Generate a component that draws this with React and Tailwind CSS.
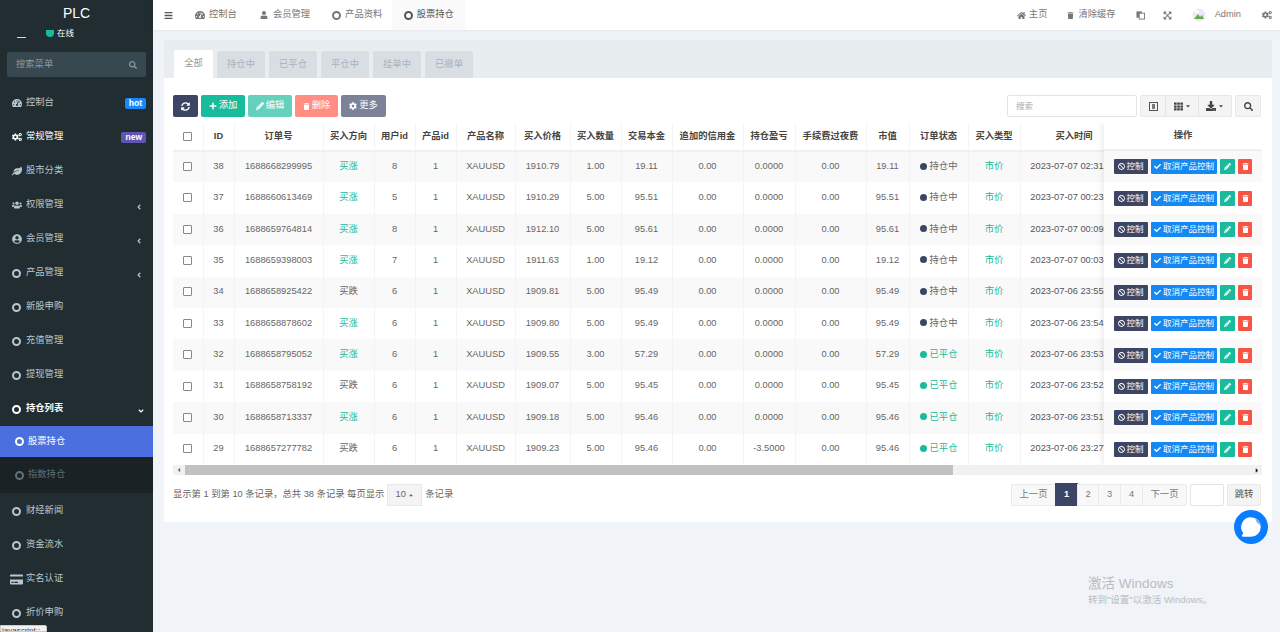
import {
  FaBan, FaBars, FaCheck, FaCog, FaCogs, FaCreditCard, FaDownload, FaHome, FaLeaf,
  FaPencilAlt, FaPlus, FaSearch, FaSyncAlt, FaTachometerAlt, FaTh, FaTrash, FaUser, FaUserCircle,
  FaUsers, FaExpandArrowsAlt, FaAngleLeft, FaAngleDown, FaCaretDown, FaCaretUp, FaCaretLeft, FaCaretRight,
} from "react-icons/fa";

// font awesome's circle-o reads heavier than FaRegCircle at this size
function Ring({ className = "" }) {
  return <span className={`inline-block w-[9px] h-[9px] rounded-full border-2 border-current ${className}`} />;
}

const menu = [
  { icon: FaTachometerAlt, label: "控制台", badge: "hot" },
  { icon: FaCogs, label: "常规管理", badge: "new", bright: true },
  { icon: FaLeaf, label: "股市分类" },
  { icon: FaUsers, label: "权限管理", arrow: true },
  { icon: FaUserCircle, label: "会员管理", arrow: true },
  { icon: Ring, label: "产品管理", arrow: true },
  { icon: Ring, label: "新股申购" },
  { icon: Ring, label: "充值管理" },
  { icon: Ring, label: "提现管理" },
];

const menuAfter = [
  { icon: Ring, label: "财经新闻" },
  { icon: Ring, label: "资金流水" },
  { icon: FaCreditCard, label: "实名认证", iconClass: "text-[13px] -ml-[2px] shrink-0" },
  { icon: Ring, label: "折价申购" },
];

const columns = [
  ["ID", "w-[31px]"],
  ["订单号", "w-[89px]"],
  ["买入方向", "w-[51px]"],
  ["用户id", "w-[41px]"],
  ["产品id", "w-[41px]"],
  ["产品名称", "w-[59px]"],
  ["买入价格", "w-[55px]"],
  ["买入数量", "w-[51px]"],
  ["交易本金", "w-[51px]"],
  ["追加的信用金", "w-[71px]"],
  ["持仓盈亏", "w-[52px]"],
  ["手续费过夜费", "w-[71px]"],
  ["市值", "w-[43px]"],
  ["订单状态", "w-[59px]"],
  ["买入类型", "w-[52px]"],
  ["买入时间", "w-[108px]"],
];

const orders = [
  [38, "1688668299995", "买涨", 8, "1910.79", "1.00", "19.11", "0.0000", "持仓中", "2023-07-07 02:31"],
  [37, "1688660613469", "买涨", 5, "1910.29", "5.00", "95.51", "0.0000", "持仓中", "2023-07-07 00:23"],
  [36, "1688659764814", "买涨", 8, "1912.10", "5.00", "95.61", "0.0000", "持仓中", "2023-07-07 00:09"],
  [35, "1688659398003", "买涨", 7, "1911.63", "1.00", "19.12", "0.0000", "持仓中", "2023-07-07 00:03"],
  [34, "1688658925422", "买跌", 6, "1909.81", "5.00", "95.49", "0.0000", "持仓中", "2023-07-06 23:55"],
  [33, "1688658878602", "买涨", 6, "1909.80", "5.00", "95.49", "0.0000", "持仓中", "2023-07-06 23:54"],
  [32, "1688658795052", "买涨", 6, "1909.55", "3.00", "57.29", "0.0000", "已平仓", "2023-07-06 23:53"],
  [31, "1688658758192", "买跌", 6, "1909.07", "5.00", "95.45", "0.0000", "已平仓", "2023-07-06 23:52"],
  [30, "1688658713337", "买涨", 6, "1909.18", "5.00", "95.46", "0.0000", "已平仓", "2023-07-06 23:51"],
  [29, "1688657277782", "买跌", 6, "1909.23", "5.00", "95.46", "-3.5000", "已平仓", "2023-07-06 23:27"],
];

const cell = "border-r border-[#f4f4f4] text-center overflow-hidden whitespace-nowrap";

function MenuItem({ item }) {
  const Icon = item.icon;
  return (
    <div className={`h-[34px] pl-[12px] pr-[7px] flex items-center ${item.bright ? "text-white" : "text-[#b8c7ce]"}`}>
      <span className="w-[14px] flex justify-start">
        <Icon className={item.iconClass || "text-[10px]"} />
      </span>
      <span className="flex-1">{item.label}</span>
      {item.badge === "hot" && (
        <span className="bg-[#1989fa] text-white font-bold rounded-[2px] px-[4px] h-[11px] leading-[11px] text-[8.5px]">hot</span>
      )}
      {item.badge === "new" && (
        <span className="bg-[#6055b0] text-white font-bold rounded-[2px] px-[4px] h-[11px] leading-[11px] text-[8.5px]">new</span>
      )}
      {item.arrow && <FaAngleLeft className="text-[8px] mr-[3px] mt-[3px]" />}
    </div>
  );
}

function Sidebar() {
  return (
    <aside className="w-[153px] shrink-0 h-full bg-[#222d32] overflow-hidden flex flex-col text-[9.3px]">
      <div className="h-[26px] flex items-center justify-center text-white text-[14px]">PLC</div>
      <div className="h-[26px] relative">
        <span className="absolute left-[17px] top-[11px] w-[9px] h-px bg-white/80" />
        <div className="pl-[46px] pt-[1px] flex items-center text-white gap-[3px] text-[8.5px]">
          <span className="w-[8px] h-[7px] bg-[#18bc9c] rounded-b-full" />
          在线
        </div>
      </div>
      <div className="mx-[7px] h-[25px] bg-[#374850] rounded-[2px] flex items-center justify-between px-[9px] text-[#8a9aa2]">
        搜索菜单
        <FaSearch className="text-[8px]" />
      </div>
      <div className="mt-[9px]">
        {menu.map((item) => (
          <MenuItem key={item.label} item={item} />
        ))}
        <div className="h-[34px] pl-[12px] pr-[8px] flex items-center text-white font-bold">
          <span className="w-[14px] flex">
            <Ring />
          </span>
          <span className="flex-1">持仓列表</span>
          <FaAngleDown className="text-[8px] mt-[3px]" />
        </div>
        <div className="h-[31px] pl-[15px] flex items-center bg-[#4c6fdf] text-white">
          <span className="w-[13px] flex">
            <Ring />
          </span>
          股票持仓
        </div>
        <div className="h-[36px] pl-[15px] flex items-center bg-[#1a2226] text-[#5f7078]">
          <span className="w-[13px] flex">
            <Ring />
          </span>
          指数持仓
        </div>
        <div className="pt-[1px]">
          {menuAfter.map((item) => (
            <MenuItem key={item.label} item={item} />
          ))}
        </div>
      </div>
    </aside>
  );
}

function TopBar() {
  return (
    <header className="h-[30px] shrink-0 bg-white flex items-center text-[9.3px] text-[#777] shadow-[0_1px_2px_rgba(0,0,0,0.06)]">
      <FaBars className="ml-[11px] text-[9px] text-[#555]" />
      <div className="ml-[22px] flex items-center gap-[4px]">
        <FaTachometerAlt className="text-[10px]" />
        控制台
      </div>
      <div className="ml-[23px] flex items-center gap-[5px]">
        <FaUser className="text-[8px]" />
        会员管理
      </div>
      <div className="ml-[22px] flex items-center gap-[4px]">
        <Ring />
        产品资料
      </div>
      <div className="ml-[10px] h-full w-[73px] bg-[#fafafa] flex items-center justify-center gap-[4px] text-[#555]">
        <Ring />
        股票持仓
      </div>
      <div className="ml-auto flex items-center">
        <FaHome className="text-[9px] mr-[3px]" />
        主页
        <FaTrash className="text-[7px] ml-[20px] mr-[4px]" />
        清除缓存
        <svg viewBox="0 0 10 10" className="w-[9px] h-[10px] ml-[20px]">
          <rect x="0.5" y="1" width="6" height="7" fill="#777" />
          <rect x="3.5" y="3" width="6" height="6.5" fill="#fff" stroke="#777" strokeWidth="1" />
        </svg>
        <FaExpandArrowsAlt className="text-[9px] ml-[18px]" />
        <svg viewBox="0 0 14 16" className="w-[14px] h-[16px] ml-[20px]">
          <circle cx="7" cy="8" r="6.5" fill="#e4edf5" />
          <path d="M2 12 L6 7 L8 10 L10 8 L12 12 Z" fill="#6aa84f" />
          <rect x="3" y="3.5" width="4" height="2.5" fill="#fff" />
        </svg>
        <span className="ml-[9px]">Admin</span>
        <FaCogs className="text-[10px] ml-[21px] mr-[8px]" />
      </div>
    </header>
  );
}

function Tabs() {
  const tabs = ["持仓中", "已平仓", "平仓中", "挂单中", "已撤单"];
  return (
    <div className="h-[38px] bg-[#e8edf0] flex items-end pl-[10px] gap-[4px]">
      <div className="w-[39px] h-[28px] bg-white rounded-t-[2px] flex items-center justify-center text-[#999]">全部</div>
      {tabs.map((t) => (
        <div key={t} className="w-[48px] h-[27px] bg-[#d8dee4] rounded-t-[2px] flex items-center justify-center text-[#aab2b9]">
          {t}
        </div>
      ))}
    </div>
  );
}

function Toolbar() {
  return (
    <div className="h-[22px] flex items-stretch text-white">
      <button className="w-[25px] bg-[#3c4563] rounded-[2px] flex items-center justify-center">
        <FaSyncAlt className="text-[9px]" />
      </button>
      <button className="ml-[3px] w-[44px] bg-[#18bc9c] rounded-[2px] flex items-center justify-center gap-[2px]">
        <FaPlus className="text-[8px]" />
        添加
      </button>
      <button className="ml-[3px] w-[44px] bg-[#65d1bc] rounded-[2px] flex items-center justify-center gap-[2px]">
        <FaPencilAlt className="text-[8px]" />
        编辑
      </button>
      <button className="ml-[3px] w-[43px] bg-[#ff8d82] rounded-[2px] flex items-center justify-center gap-[2px]">
        <FaTrash className="text-[7px]" />
        删除
      </button>
      <button className="ml-[3px] w-[45px] bg-[#7c8298] rounded-[2px] flex items-center justify-center gap-[2px]">
        <FaCog className="text-[8px]" />
        更多
      </button>
      <div className="ml-auto w-[130px] bg-white border border-[#e4e4e4] rounded-[2px] flex items-center pl-[8px] text-[#aaa] text-[8.5px]">
        搜索
      </div>
      <div className="ml-[3px] w-[92px] flex bg-[#f4f4f4] border border-[#e8e8e8] rounded-[2px] text-[#444]">
        <div className="w-[25px] border-r border-[#e4e4e4] flex items-center justify-center">
          <svg viewBox="0 0 9 9" className="w-[9px] h-[9px]">
            <rect x="0.5" y="0.5" width="8" height="8" fill="none" stroke="#555" strokeWidth="1" />
            <rect x="3" y="2" width="3" height="5" fill="#777" />
          </svg>
        </div>
        <div className="w-[33px] border-r border-[#e4e4e4] flex items-center justify-center gap-[2px]">
          <FaTh className="text-[9px]" />
          <FaCaretDown className="text-[6px]" />
        </div>
        <div className="flex-1 flex items-center justify-center gap-[2px]">
          <FaDownload className="text-[10px]" />
          <FaCaretDown className="text-[6px]" />
        </div>
      </div>
      <div className="ml-[3px] mr-[1px] w-[26px] bg-[#f4f4f4] border border-[#e8e8e8] rounded-[2px] flex items-center justify-center text-[#444]">
        <FaSearch className="text-[9px]" />
      </div>
    </div>
  );
}

function OrderTable() {
  return (
    <div className="mt-[6px] relative h-[342px] overflow-hidden">
      <table className="table-fixed border-collapse w-[955px]">
        <colgroup>
          <col className="w-[30px]" />
          {columns.map(([name, w]) => (
            <col key={name} className={w} />
          ))}
        </colgroup>
        <thead>
          <tr className="h-[28px] border-b-2 border-[#f0f0f0] text-[#444]">
            <th className={cell}>
              <span className="inline-block w-[9px] h-[9px] border border-[#888] rounded-[1px] bg-white align-middle" />
            </th>
            {columns.map(([name]) => (
              <th key={name} className={`${cell} font-bold`}>
                {name}
              </th>
            ))}
          </tr>
        </thead>
        <tbody>
          {orders.map((o, i) => (
            <tr key={o[0]} className={`h-[31.4px] ${i % 2 === 0 ? "bg-[#f9f9f9]" : "bg-white"}`}>
              <td className={cell}>
                <span className="inline-block w-[9px] h-[9px] border border-[#888] rounded-[1px] bg-white align-middle" />
              </td>
              <td className={cell}>{o[0]}</td>
              <td className={cell}>{o[1]}</td>
              <td className={`${cell} ${o[2] === "买涨" ? "text-[#18bc9c]" : ""}`}>{o[2]}</td>
              <td className={cell}>{o[3]}</td>
              <td className={cell}>1</td>
              <td className={cell}>XAUUSD</td>
              <td className={cell}>{o[4]}</td>
              <td className={cell}>{o[5]}</td>
              <td className={cell}>{o[6]}</td>
              <td className={cell}>0.00</td>
              <td className={cell}>{o[7]}</td>
              <td className={cell}>0.00</td>
              <td className={cell}>{o[6]}</td>
              <td className={`${cell} ${o[8] === "已平仓" ? "text-[#18bc9c]" : ""}`}>
                <span
                  className={`inline-block w-[7px] h-[7px] rounded-full mr-[3px] align-[-0.5px] ${
                    o[8] === "已平仓" ? "bg-[#18bc9c]" : "bg-[#3c4563]"
                  }`}
                />
                {o[8]}
              </td>
              <td className={`${cell} text-[#18bc9c]`}>市价</td>
              <td className={`${cell} text-[#555] pr-[14px]`}>{o[9]}</td>
            </tr>
          ))}
        </tbody>
      </table>
      {/* fixed right column */}
      <div className="absolute right-0 top-0 w-[158px] bg-white shadow-[-2px_0_6px_rgba(0,0,0,0.08)]">
        <div className="h-[28px] border-b-2 border-[#f0f0f0] flex items-center justify-center font-bold text-[#444]">操作</div>
        {orders.map((o, i) => (
          <div
            key={o[0]}
            className={`h-[31.4px] flex items-center pl-[10px] gap-[3px] text-white ${i % 2 === 0 ? "bg-[#f9f9f9]" : "bg-white"}`}
          >
            <span className="w-[34px] h-[15px] bg-[#3c4563] rounded-[1px] flex items-center justify-center gap-[1px] text-[8.5px]">
              <FaBan className="text-[7px]" />
              控制
            </span>
            <span className="w-[66px] h-[15px] bg-[#1688f2] rounded-[1px] flex items-center justify-center gap-[2px] text-[8.5px]">
              <FaCheck className="text-[7px]" />
              取消产品控制
            </span>
            <span className="w-[15px] h-[15px] bg-[#18bc9c] rounded-[1px] flex items-center justify-center">
              <FaPencilAlt className="text-[7px]" />
            </span>
            <span className="w-[14px] h-[15px] bg-[#f75444] rounded-[1px] flex items-center justify-center">
              <FaTrash className="text-[7px]" />
            </span>
          </div>
        ))}
      </div>
    </div>
  );
}

function ScrollBar() {
  return (
    <div className="h-[10px] bg-[#f1f1f1] flex items-center text-[#555]">
      <FaCaretLeft className="text-[6px] w-[12px] shrink-0" />
      <div className="w-[768px] h-full bg-[#c1c1c1]" />
      <FaCaretRight className="text-[7px] w-[10px] ml-auto text-[#222]" />
    </div>
  );
}

function Pager() {
  const pageBtn = "h-[22px] bg-[#f8f8f8] border border-[#eaeaea] -ml-px flex items-center justify-center text-[#777]";
  return (
    <div className="mt-[8px] h-[23px] flex items-center text-[#666]">
      <span>显示第 1 到第 10 条记录，总共 38 条记录 每页显示</span>
      <div className="ml-[3px] w-[35px] h-[22px] bg-[#f4f4f4] border border-[#e8e8e8] flex items-center justify-center gap-[2px]">
        10
        <FaCaretUp className="text-[6px]" />
      </div>
      <span className="ml-[3px]">条记录</span>
      <div className="ml-auto flex items-center">
        <div className={`${pageBtn} w-[45px] rounded-l-[2px]`}>上一页</div>
        <div className="h-[23px] w-[23px] -ml-px bg-[#3c4563] text-white font-bold flex items-center justify-center">1</div>
        <div className={`${pageBtn} w-[22px]`}>2</div>
        <div className={`${pageBtn} w-[23px]`}>3</div>
        <div className={`${pageBtn} w-[23px]`}>4</div>
        <div className={`${pageBtn} w-[45px] rounded-r-[2px]`}>下一页</div>
        <div className="ml-[3px] w-[34px] h-[22px] bg-white border border-[#e4e4e4] rounded-[2px]" />
        <div className="ml-[3px] mr-[1px] w-[34px] h-[22px] bg-[#f4f4f4] border border-[#e8e8e8] rounded-[2px] flex items-center justify-center text-[#555]">
          跳转
        </div>
      </div>
    </div>
  );
}

export default function App() {
  return (
    <div className="relative w-[1280px] h-[632px] overflow-hidden flex bg-[#f0f3f7] text-[9.3px] text-[#666] [font-family:'Liberation_Sans','Noto_Sans_CJK_SC',sans-serif]">
      <Sidebar />
      <main className="flex-1 min-w-0 flex flex-col">
        <TopBar />
        <div className="mt-[10px] ml-[11px] mr-[8px]">
          <Tabs />
          <div className="bg-white h-[444px] px-[9px] pt-[17px] pr-[10px] rounded-b-[2px]">
            <Toolbar />
            <OrderTable />
            <ScrollBar />
            <Pager />
          </div>
        </div>
      </main>

      {/* browser status bubble */}
      <div className="absolute left-0 bottom-0 w-[47px] h-[7px] overflow-hidden bg-[#f2f2f2] border border-[#ccc] rounded-tr-[2px] text-[#444] text-[8px] leading-[9px] pl-[1px]">
        javascript:;
      </div>

      {/* chat widget */}
      <div className="absolute left-[1234px] top-[510px] w-[34px] h-[34px] rounded-full bg-[#0a7cff] flex items-center justify-center">
        <svg viewBox="0 0 24 24" className="w-[26px] h-[26px]">
          <path d="M12 3a9 9 0 0 1 9 9 9 9 0 0 1-9 9H4.5c-.8 0-1.2-.8-.8-1.4l1.2-2A9 9 0 0 1 12 3z" fill="#fff" />
          <path d="M16 3.8a9 9 0 0 1 5 6.2 6 6 0 0 1-5-6.2z" fill="#7db8ff" />
        </svg>
      </div>

      {/* windows watermark */}
      <div className="absolute left-[1088px] top-[575px] text-[#b9bcc0]">
        <div className="text-[13.5px] leading-[17px]">激活 Windows</div>
        <div className="text-[9.5px] leading-[13px] mt-[1px]">转到"设置"以激活 Windows。</div>
      </div>
    </div>
  );
}
